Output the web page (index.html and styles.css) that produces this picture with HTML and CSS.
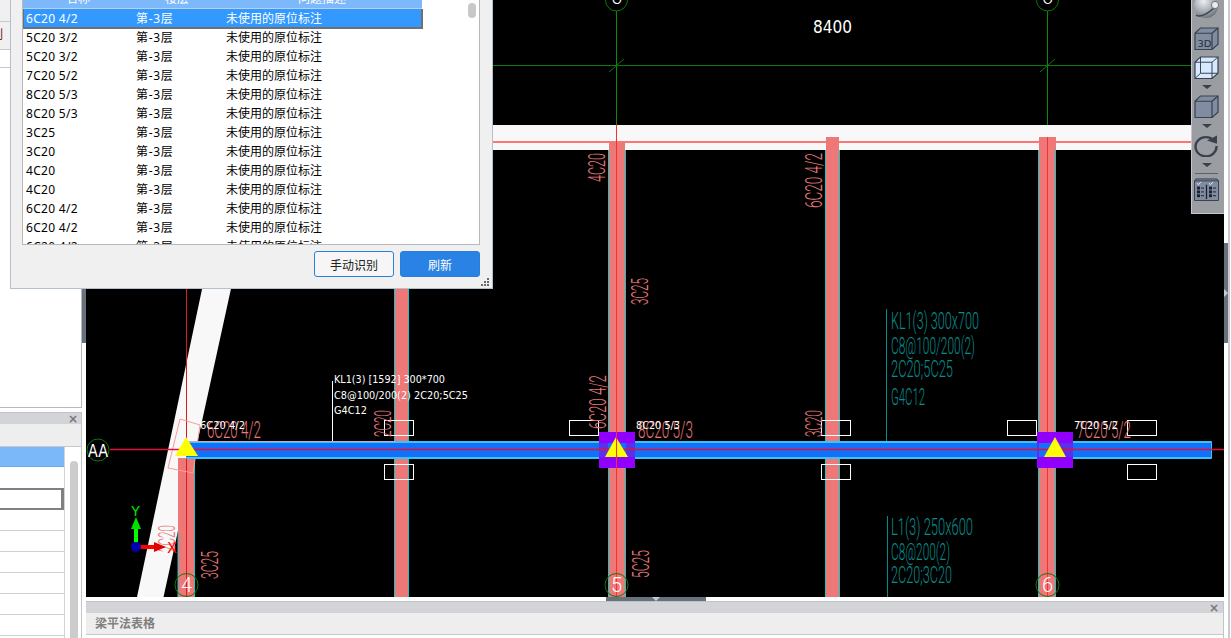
FILE: index.html
```html
<!DOCTYPE html>
<html lang="zh-CN">
<head>
<meta charset="utf-8">
<title>梁平法表格</title>
<link rel="stylesheet" href="styles.css">
</head>
<body>
<div class="app">
  <aside class="left">
    <div class="left-top">
      <div class="lt-bar"></div>
      <div class="lt-tab"><span class="lt-glyph">列</span></div>
      <div class="lt-sub"></div>
    </div>
    <div class="left-bottom">
      <div class="title-bar"><span class="close">×</span></div>
      <div class="tool-strip"></div>
      <div class="prop-body">
        <div class="prop-rows">
          <div class="prop-row prop-sel"></div>
          <div class="prop-row prop-blank"></div>
          <div class="prop-row prop-edit"></div>
          <div class="prop-row"></div>
          <div class="prop-row"></div>
          <div class="prop-row"></div>
          <div class="prop-row"></div>
          <div class="prop-row"></div>
          <div class="prop-row"></div>
        </div>
        <div class="prop-scroll"><div class="prop-thumb"></div></div>
      </div>
    </div>
  </aside>
  <div class="vsplit"><div class="vsplit-handle"></div></div>
  <main class="center">
    <div class="canvas">
      <svg class="cad-svg" viewBox="86 0 1138 597" width="1138" height="597">
        <rect x="86" y="125" width="1138" height="25" fill="#f8f8f8"/>
        <polygon points="205,275 234,275 163.5,597 137,597" fill="#f8f8f8"/>
        <line x1="86" y1="65.5" x2="1191" y2="65.5" stroke="#0a7a0a"/>
        <line x1="616.5" y1="11" x2="616.5" y2="125" stroke="#0a8a0a"/>
        <line x1="1047.5" y1="11" x2="1047.5" y2="125" stroke="#0a8a0a"/>
        <line x1="609" y1="72" x2="624" y2="59" stroke="#0a7a0a"/>
        <line x1="1040" y1="72" x2="1055" y2="59" stroke="#0a7a0a"/>
        <circle cx="616.5" cy="0" r="11" class="axis-ring"/>
        <circle cx="1047.5" cy="0" r="11" class="axis-ring"/>
        <text class="cad-num" x="616.5" y="4" text-anchor="middle">5</text>
        <text class="cad-num" x="1047.5" y="4" text-anchor="middle">6</text>
        <text class="dim" x="813" y="33" textLength="39" lengthAdjust="spacingAndGlyphs">8400</text>

        <line x1="86" y1="142" x2="1191" y2="142" stroke="#ff4a4a" stroke-width="1.6"/>

        <rect x="395" y="288" width="14" height="309" fill="#ee7777"/>
        <rect x="609" y="142" width="16" height="455" fill="#ee7777"/>
        <rect x="826" y="137" width="13" height="460" fill="#ee7777"/>
        <rect x="1039" y="137" width="17" height="460" fill="#ee7777"/>
        <rect x="178" y="458" width="16" height="139" fill="#ee7777"/>
        <g class="col-edge">
          <line x1="394.5" y1="288" x2="394.5" y2="597"/><line x1="408.5" y1="288" x2="408.5" y2="597"/>
          <line x1="608.5" y1="150" x2="608.5" y2="597"/><line x1="625.5" y1="150" x2="625.5" y2="597"/>
          <line x1="825.5" y1="150" x2="825.5" y2="597"/><line x1="839.5" y1="150" x2="839.5" y2="597"/>
          <line x1="1038.5" y1="150" x2="1038.5" y2="597"/><line x1="1055.5" y1="150" x2="1055.5" y2="597"/>
          <line x1="178" y1="533" x2="178" y2="597"/><line x1="194.5" y1="458" x2="194.5" y2="597"/>
        </g>
        <line x1="616.5" y1="125" x2="616.5" y2="597" stroke="#ff2e2e"/>
        <line x1="1047.5" y1="137" x2="1047.5" y2="597" stroke="#ff2e2e"/>
        <line x1="186.5" y1="288" x2="186.5" y2="597" stroke="#e01818"/>
        <polygon points="180,419 200,425 193,473 168,468" fill="none" stroke="#ff9a9a"/>

        <rect x="599" y="432" width="36" height="36" fill="#8f00ff"/>
        <rect x="1037" y="432" width="36" height="36" fill="#8f00ff"/>
        <rect x="186" y="441" width="1026" height="18" rx="1" fill="#39c4f6"/>
        <rect x="186" y="443" width="1025" height="14" fill="#1270fa"/>
        <line x1="186" y1="441.5" x2="395" y2="441.5" stroke="#c8a8c8"/>
        <rect x="599" y="432" width="36" height="11" fill="#8f00ff"/>
        <rect x="599" y="457" width="36" height="11" fill="#8f00ff"/>
        <rect x="1037" y="432" width="36" height="11" fill="#8f00ff"/>
        <rect x="1037" y="457" width="36" height="11" fill="#8f00ff"/>
        <rect x="599" y="443" width="9" height="14" fill="#5a30e8"/>
        <rect x="626" y="443" width="9" height="14" fill="#5a30e8"/>
        <rect x="1037" y="443" width="2" height="14" fill="#5a30e8"/>
        <rect x="1056" y="443" width="17" height="14" fill="#5a30e8"/>
        <line x1="110" y1="449.5" x2="1224" y2="449.5" stroke="#e0103a" stroke-width="1.4"/>
        <polygon points="616,437 628,457 605,457" fill="#ffff00"/>
        <polygon points="1055,437 1066,457 1044,457" fill="#ffff00"/>
        <polygon points="186,437 198,456 175,456" fill="#ffff00"/>
        <line x1="616.5" y1="432" x2="616.5" y2="468" stroke="#ff2e2e"/>

        <g class="stub">
          <rect x="384.5" y="420.5" width="29" height="15"/>
          <rect x="569.5" y="420.5" width="29" height="15"/>
          <rect x="821.5" y="420.5" width="29" height="15"/>
          <rect x="1007.5" y="420.5" width="29" height="15"/>
          <rect x="1127.5" y="420.5" width="29" height="15"/>
          <rect x="384.5" y="464.5" width="29" height="15"/>
          <rect x="821.5" y="464.5" width="29" height="15"/>
          <rect x="1127.5" y="464.5" width="29" height="15"/>
        </g>

        <g class="cad cad-red">
          <text transform="translate(605,182) rotate(-90)" textLength="29" lengthAdjust="spacingAndGlyphs">4C20</text>
          <text transform="translate(822,208) rotate(-90)" textLength="55" lengthAdjust="spacingAndGlyphs">6C20 4/2</text>
          <text transform="translate(648,305) rotate(-90)" textLength="27" lengthAdjust="spacingAndGlyphs">3C25</text>
          <text transform="translate(606,429) rotate(-90)" textLength="54" lengthAdjust="spacingAndGlyphs">6C20 4/2</text>
          <text transform="translate(391,437) rotate(-90)" textLength="27" lengthAdjust="spacingAndGlyphs">2C20</text>
          <text transform="translate(822,437) rotate(-90)" textLength="27" lengthAdjust="spacingAndGlyphs">3C20</text>
          <text transform="translate(649,578) rotate(-90)" textLength="28" lengthAdjust="spacingAndGlyphs">5C25</text>
          <text transform="translate(218,579) rotate(-90)" textLength="28" lengthAdjust="spacingAndGlyphs">3C25</text>
          <text transform="translate(175,552) rotate(-90)" textLength="27" lengthAdjust="spacingAndGlyphs">2C20</text>
          <text x="207" y="438" textLength="54" lengthAdjust="spacingAndGlyphs">6C20 4/2</text>
          <text x="638" y="438" textLength="55" lengthAdjust="spacingAndGlyphs">8C20 5/3</text>
          <text x="1077" y="438" textLength="54" lengthAdjust="spacingAndGlyphs">7C20 5/2</text>
        </g>

        <g class="cad cad-teal">
          <text x="891" y="329" textLength="88" lengthAdjust="spacingAndGlyphs">KL1(3) 300x700</text>
          <text x="891" y="354" textLength="84" lengthAdjust="spacingAndGlyphs">C8@100/200(2)</text>
          <text x="891" y="377" textLength="62" lengthAdjust="spacingAndGlyphs">2C20;5C25</text>
          <text x="891" y="405" textLength="34" lengthAdjust="spacingAndGlyphs">G4C12</text>
          <text x="891" y="535" textLength="82" lengthAdjust="spacingAndGlyphs">L1(3) 250x600</text>
          <text x="891" y="560" textLength="59" lengthAdjust="spacingAndGlyphs">C8@200(2)</text>
          <text x="891" y="583" textLength="61" lengthAdjust="spacingAndGlyphs">2C20;3C20</text>
        </g>
        <line x1="886.5" y1="309" x2="886.5" y2="441" stroke="#008c8c"/>
        <line x1="887.5" y1="516" x2="887.5" y2="597" stroke="#008c8c"/>

        <line x1="332.5" y1="381" x2="332.5" y2="441" stroke="#ffffff"/>
        <g class="note">
          <text x="334" y="383" textLength="111" lengthAdjust="spacingAndGlyphs">KL1(3) [1592] 300*700</text>
          <text x="334" y="399" textLength="134" lengthAdjust="spacingAndGlyphs">C8@100/200(2) 2C20;5C25</text>
          <text x="334" y="414" textLength="33" lengthAdjust="spacingAndGlyphs">G4C12</text>
          <text x="200" y="429" textLength="45" lengthAdjust="spacingAndGlyphs">6C20 4/2</text>
          <text x="636" y="429" textLength="44" lengthAdjust="spacingAndGlyphs">8C20 5/3</text>
          <text x="1074" y="429" textLength="44" lengthAdjust="spacingAndGlyphs">7C20 5/2</text>
        </g>

        <circle cx="98" cy="450" r="11" class="axis-ring"/>
        <circle cx="186.5" cy="585" r="11.5" class="axis-ring"/>
        <circle cx="616.5" cy="585" r="11.5" class="axis-ring"/>
        <circle cx="1047.5" cy="585" r="11.5" class="axis-ring"/>
        <text class="cad-num cad-num-aa" x="88" y="457" textLength="20" lengthAdjust="spacingAndGlyphs">AA</text>
        <text class="cad-num" x="186.5" y="592" text-anchor="middle">4</text>
        <text class="cad-num" x="616.5" y="592" text-anchor="middle">5</text>
        <text class="cad-num" x="1047.5" y="592" text-anchor="middle">6</text>

        <rect x="134" y="527" width="4" height="17" fill="#00ff00"/>
        <polygon points="136,517 141,529 131,529" fill="#00e000"/>
        <rect x="140" y="545" width="16" height="4" fill="#ff0000"/>
        <polygon points="166,547 154,542 154,552" fill="#e00000"/>
        <circle cx="136" cy="547" r="5" fill="#0000b0"/>
        <text class="axis-y" x="135.5" y="516" text-anchor="middle">Y</text>
        <text class="axis-x" x="172" y="553" text-anchor="middle">X</text>
      </svg>

      <section class="float-tools">
        <svg class="ft-sphere" width="26" height="19" viewBox="0 0 26 19">
          <defs>
            <radialGradient id="ball" cx="0.4" cy="0.3" r="0.8">
              <stop offset="0" stop-color="#eef0f3"/><stop offset="0.6" stop-color="#9fa5ad"/><stop offset="1" stop-color="#5a6068"/>
            </radialGradient>
          </defs>
          <circle cx="12" cy="6" r="12" fill="url(#ball)"/>
          <path d="M2 15 C6 18 14 14 22 6" fill="none" stroke="#3e434c" stroke-width="1.5"/>
          <circle cx="21" cy="5" r="3.6" fill="#e8eaee" stroke="#70757d"/>
        </svg>
        <svg class="ft-icon ft-first" width="25" height="23" viewBox="0 0 25 24" preserveAspectRatio="none">
          <path d="M1 6.5 L6.5 1 H24 V18 L18 23.5 H1 Z" fill="#7f8ca1" stroke="#3a404c" stroke-width="1.2"/>
          <path d="M1 6.5 H18 V23.5 M18 6.5 L24 1" fill="none" stroke="#3a404c" stroke-width="1.2"/>
          <text class="ft-3d" x="3.5" y="21">3D</text>
        </svg>
        <svg class="ft-icon" width="25" height="23" viewBox="0 0 25 24" preserveAspectRatio="none">
          <path d="M1 6.5 L6.5 1 H24 V18 L18 23.5 H1 Z" fill="#d6e9ff" stroke="#3a404c" stroke-width="1.2"/>
          <path d="M1 6.5 H18 V23.5 M18 6.5 L24 1 M1 23.5 L6.5 18 H24 M6.5 1 V18" fill="none" stroke="#3a404c" stroke-width="1"/>
        </svg>
        <span class="ft-arrow"></span>
        <svg class="ft-icon" width="25" height="23" viewBox="0 0 25 24" preserveAspectRatio="none">
          <path d="M1 6.5 L6.5 1 H24 V18 L18 23.5 H1 Z" fill="#7f8ca1" stroke="#3a404c" stroke-width="1.2"/>
          <path d="M1 6.5 H18 V23.5 M18 6.5 L24 1" fill="none" stroke="#3a404c" stroke-width="1.2"/>
        </svg>
        <span class="ft-arrow"></span>
        <svg class="ft-icon ft-refresh" width="25" height="22" viewBox="0 0 25 24" preserveAspectRatio="none">
          <path d="M18.5 4.5 A10.5 10.5 0 1 0 22.5 12" fill="none" stroke="#3a404c" stroke-width="2.4"/>
          <polygon points="13,6 23,0.5 23,9.5" fill="#3a404c"/>
        </svg>
        <span class="ft-arrow"></span>
        <div class="ft-sep"></div>
        <svg class="ft-icon ft-table" width="25" height="23" viewBox="0 0 25 24" preserveAspectRatio="none">
          <path d="M2 1 H23 L24.5 3 V23.5 H0.5 V3 Z" fill="#7f8ca1" stroke="#3a404c"/>
          <path d="M0.5 3 H24.5" stroke="#3a404c"/>
          <path d="M12.5 7 V22" stroke="#1e222a" stroke-width="1.3"/>
          <path d="M3 5.5 L4.5 7 L7 4 M15 5.5 L16.5 7 L19 4" fill="none" stroke="#e8eaee"/>
          <g fill="none" stroke="#1e222a">
            <rect x="3.5" y="9.5" width="2" height="2"/><rect x="3.5" y="13.5" width="2" height="2"/><rect x="3.5" y="17.5" width="2" height="2"/>
            <rect x="15.5" y="9.5" width="2" height="2"/><rect x="15.5" y="13.5" width="2" height="2"/><rect x="15.5" y="17.5" width="2" height="2"/>
            <path d="M7 10.5 H10 M7 14.5 H10 M7 18.5 H10 M19 10.5 H22 M19 14.5 H22 M19 18.5 H22"/>
          </g>
        </svg>
      </section>
    </div>
    <div class="hsplit"><div class="hsplit-handle"><span class="hsplit-tri"></span></div></div>
    <section class="bottom">
      <div class="title-bar"><span class="close">×</span></div>
      <div class="bottom-tab">梁平法表格</div>
    </section>
  </main>
  <div class="right-strip">
    <div class="right-handle"><span class="right-tri"></span></div>
    <div class="right-line"></div>
  </div>
</div>

<section class="dialog">
  <div class="listbox">
    <div class="list-head">
      <span class="c-name">名称</span><span class="c-floor">楼层</span><span class="c-desc">问题描述</span>
    </div>
    <div class="list-row list-sel"><span class="c1">6C20 4/2</span><span class="c2">第-3层</span><span class="c3">未使用的原位标注</span></div>
    <div class="list-row"><span class="c1">5C20 3/2</span><span class="c2">第-3层</span><span class="c3">未使用的原位标注</span></div>
    <div class="list-row"><span class="c1">5C20 3/2</span><span class="c2">第-3层</span><span class="c3">未使用的原位标注</span></div>
    <div class="list-row"><span class="c1">7C20 5/2</span><span class="c2">第-3层</span><span class="c3">未使用的原位标注</span></div>
    <div class="list-row"><span class="c1">8C20 5/3</span><span class="c2">第-3层</span><span class="c3">未使用的原位标注</span></div>
    <div class="list-row"><span class="c1">8C20 5/3</span><span class="c2">第-3层</span><span class="c3">未使用的原位标注</span></div>
    <div class="list-row"><span class="c1">3C25</span><span class="c2">第-3层</span><span class="c3">未使用的原位标注</span></div>
    <div class="list-row"><span class="c1">3C20</span><span class="c2">第-3层</span><span class="c3">未使用的原位标注</span></div>
    <div class="list-row"><span class="c1">4C20</span><span class="c2">第-3层</span><span class="c3">未使用的原位标注</span></div>
    <div class="list-row"><span class="c1">4C20</span><span class="c2">第-3层</span><span class="c3">未使用的原位标注</span></div>
    <div class="list-row"><span class="c1">6C20 4/2</span><span class="c2">第-3层</span><span class="c3">未使用的原位标注</span></div>
    <div class="list-row"><span class="c1">6C20 4/2</span><span class="c2">第-3层</span><span class="c3">未使用的原位标注</span></div>
    <div class="list-row"><span class="c1">6C20 4/2</span><span class="c2">第-3层</span><span class="c3">未使用的原位标注</span></div>
    <div class="list-thumb"></div>
  </div>
  <div class="dialog-actions">
    <button class="btn">手动识别</button>
    <button class="btn btn-primary">刷新</button>
  </div>
  <svg class="grip" width="9" height="9" viewBox="0 0 9 9">
    <g fill="#6a6a6a">
      <rect x="6" y="0" width="2" height="2"/><rect x="3" y="3" width="2" height="2"/><rect x="6" y="3" width="2" height="2"/>
      <rect x="0" y="6" width="2" height="2"/><rect x="3" y="6" width="2" height="2"/><rect x="6" y="6" width="2" height="2"/>
    </g>
  </svg>
</section>
</body>
</html>
```
FILE: styles.css
```css
* { box-sizing: border-box; }
html, body { margin: 0; height: 100%; overflow: hidden; background: #fff; }
body { font-family: "Noto Sans", "Noto Sans CJK SC", sans-serif; font-size: 12px; color: #000; }

.app { display: flex; width: 1231px; height: 638px; }

/* left column */
.left { width: 82px; flex: none; display: flex; flex-direction: column; }
.left-top { height: 408px; flex: none; border-right: 1px solid #b8b8b8; border-bottom: 1px solid #b8b8b8; background: #fff; }
.lt-bar { height: 22px; background: #f0f0f0; border-bottom: 1px solid #c4c8cc; }
.lt-tab { height: 28px; background: #f0f0f0; border-bottom: 1px solid #c4c8cc; overflow: hidden; line-height: 26px; }
.lt-glyph { display: block; margin-left: -9px; color: #6a1a2a; font-size: 12px; }
.lt-sub { height: 18px; border-bottom: 1px solid #c4c8cc; }
.left-bottom { margin-top: 4px; flex: 1; min-height: 0; display: flex; flex-direction: column; border-right: 1px solid #c4c4c4; overflow: hidden; }

.title-bar { height: 12px; flex: none; background: #d2d4d8; border-top: 1px solid #c0c2c6; display: flex; justify-content: flex-end; align-items: center; padding-right: 3px; }
.close { font-family: "DejaVu Sans", sans-serif; font-weight: bold; font-size: 12px; line-height: 10px; color: #777; }
.tool-strip { height: 23px; flex: none; background: #eeeeee; border-bottom: 1px solid #c8c8c8; }
.prop-body { flex: 1; display: flex; min-height: 0; background: #fff; }
.prop-rows { width: 65px; flex: none; border-right: 1px solid #d4d4d4; }
.prop-row { height: 21px; border-bottom: 1px solid #d0d0d0; }
.prop-sel { height: 20px; background: #7ab8fa; border-bottom: 1px solid #6aa8ea; }
.prop-blank { height: 21px; border-bottom: 0; }
.prop-edit { height: 22px; border: 2px solid #808080; border-left: 0; border-right-width: 3px; }
.prop-scroll { flex: 1; padding: 14px 3px 0 5px; }
.prop-thumb { width: 8px; height: 260px; border-radius: 4px; background: #cccccc; }

.vsplit { width: 4px; flex: none; padding-top: 288px; }
.vsplit-handle { height: 55px; background: #68727c; }

/* centre */
.center { width: 1138px; flex: none; display: flex; flex-direction: column; }
.canvas { height: 597px; flex: none; position: relative; background: #000; overflow: hidden; }
.cad-svg { display: block; }
.hsplit { height: 4px; flex: none; padding-left: 520px; background: #fff; }
.hsplit-handle { width: 100px; height: 4px; background: #68727c; display: flex; justify-content: center; }
.hsplit-tri { width: 0; height: 0; border-left: 4px solid transparent; border-right: 4px solid transparent; border-top: 4px solid #c8ccd0; }
.bottom { flex: 1; display: flex; flex-direction: column; background: #fff; border-right: 1px solid #c4c4c4; }
.bottom .title-bar { padding-right: 4px; }
.bottom-tab { height: 22px; flex: none; background: #eeeeee; border-bottom: 1px solid #c8c8c8; padding-left: 9px; line-height: 21px; font-weight: bold; color: #808080; }

/* right strip */
.right-strip { flex: 1; display: flex; padding-top: 243px; position: relative; }
.right-handle { width: 4px; height: 100px; background: #68727c; display: flex; align-items: center; }
.right-tri { width: 0; height: 0; border-top: 4px solid transparent; border-bottom: 4px solid transparent; border-left: 4px solid #c8ccd0; }
.right-line { position: absolute; left: 4px; top: 0; width: 2px; height: 638px; background: #c8ccd0; }

/* CAD text */
.axis-ring { fill: none; stroke: #0a7a0a; stroke-width: 1; }
.col-edge line { stroke: #12c8c8; stroke-width: 1; }
.stub rect { fill: none; stroke: #ffffff; stroke-width: 1; }
.cad text { font-family: Roboto, "Liberation Sans", sans-serif; font-weight: 300; font-size: 24px; }
.cad-red text { fill: #e87a7a; }
.cad-teal text { fill: #0a8c8c; }
.note text { font-family: "DejaVu Sans", sans-serif; font-size: 10px; fill: #ffffff; }
.dim { font-family: "DejaVu Sans", sans-serif; font-size: 17px; fill: #ffffff; }
.cad-num { font-family: Roboto, "Liberation Sans", sans-serif; font-weight: 300; font-size: 20px; fill: #ffffff; }
.cad-num-aa { font-family: "DejaVu Sans", sans-serif; font-weight: 400; font-size: 18px; }
.axis-y { font-family: "Liberation Mono", monospace; font-size: 15px; fill: #00e000; }
.axis-x { font-family: "Liberation Mono", monospace; font-size: 16px; fill: #ff0000; }

/* floating view toolbar */
.float-tools { position: absolute; left: 1105px; top: 0; width: 33px; height: 214px; background: #9a9da2; border-left: 1px solid #c4c6ca; border-bottom: 1px solid #c4c6ca; display: flex; flex-direction: column; align-items: center; padding-right: 3px; }
.ft-sphere { flex: none; display: block; }
.ft-icon { flex: none; display: block; }
.ft-first { margin-top: 8px; margin-bottom: 6px; }
.ft-arrow { flex: none; width: 0; height: 0; margin: 6px 0; border-left: 5px solid transparent; border-right: 5px solid transparent; border-top: 4px solid #3a404c; }
.ft-3d { font-family: "DejaVu Sans", sans-serif; font-size: 10px; fill: #2a2e36; }
.ft-refresh { margin-top: 1px; }
.ft-sep { flex: none; width: 23px; height: 1px; background: #5c6068; }
.ft-table { margin-top: 4px; }

/* dialog */
.dialog { position: absolute; left: 10px; top: -20px; width: 483px; height: 309px; background: #f0f0f0; border: 1px solid #b4c0cc; display: flex; flex-direction: column; }
.listbox { position: relative; margin: 0 12px 0 11px; height: 264px; flex: none; background: #fff; border: 1px solid #b8b8b8; overflow: hidden; }
.list-head { height: 27px; width: 399px; position: relative; background: #7db8fa; border-bottom: 1px solid #b8d0e8; color: #fff; line-height: 16px; }
.list-head span { position: absolute; top: 9px; }
.c-name { left: 43px; }
.c-floor { left: 142px; }
.c-desc { left: 275px; }
.list-row { display: flex; height: 19px; width: 400px; line-height: 19px; white-space: nowrap; }
.c1 { width: 110px; margin-left: 3px; flex: none; letter-spacing: 0.3px; }
.c2 { width: 90px; flex: none; letter-spacing: 0.7px; }
.c3 { flex: 1; }
.list-sel { background: #3399ff; color: #fff; border-style: solid; border-color: #707070; border-width: 0 2px 2px 1px; height: 20px; margin-bottom: -1px; }
.list-sel .c1 { margin-left: 2px; }
.list-thumb { position: absolute; right: 3px; top: 21px; width: 8px; height: 15px; border-radius: 4px; background: #c8c8c8; }
.dialog-actions { display: flex; justify-content: flex-end; gap: 6px; margin: 6px 12px 0 0; }
.btn { width: 80px; height: 26px; padding: 0; border: 1px solid #2b7fd8; border-radius: 3px; background: #f6f6f6; color: #222; font-family: "Noto Sans CJK SC", "Noto Sans", sans-serif; font-size: 12px; }
.btn-primary { background: #2a82e4; color: #fff; }
.grip { position: absolute; right: 2px; bottom: 1px; }
```
